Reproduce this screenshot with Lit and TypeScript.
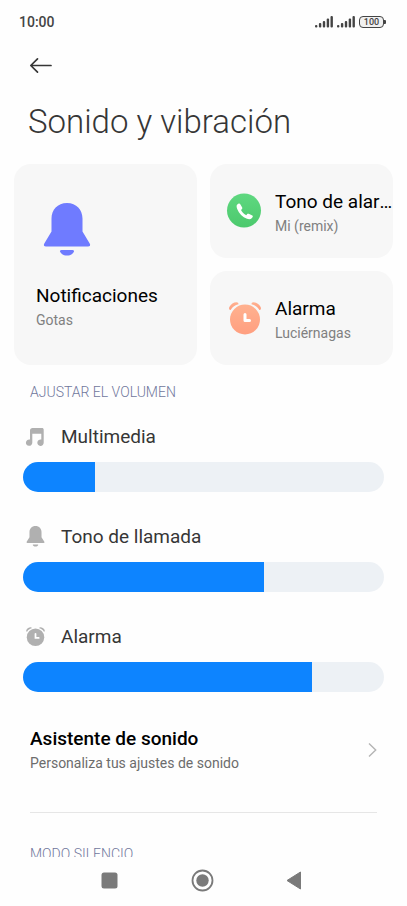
import { LitElement, html, css, svg } from "lit";
import { customElement, state } from "lit/decorators.js";

type IconName = "music" | "bell" | "clock";

interface Volume {
  id: string;
  label: string;
  icon: IconName;
  value: number;
}

const MAX_VOLUME = 15;

const bellShape = svg`
  <path d="M24 1C14.500 1 8.500 8 8.500 16.500V29.500L1.300 41.500C.3 43.500 1 44.500 3 44.500H45C47 44.500 47.700 43.500 46.700 41.500L39.500 29.500V16.500C39.500 8 33.500 1 24 1Z"/>
  <path d="M18.500 48H29.500C31 48 31.400 49 30.800 50C29.500 52.500 27 53.500 24 53.500S18.500 52.500 17.200 50C16.600 49 17 48 18.500 48Z"/>`;

const clockShape = svg`
  <path d="M1.500 8.500C.8 7.500 1 6.500 1.500 5.700C3 3 5.500 1.300 8.500 1.200C10 1.200 10.500 2 10.500 3.200C7 4 4.500 6 2.800 8.700C2.300 9.300 1.900 9.200 1.500 8.500Z"/>
  <path d="M32.500 8.500C33.200 7.500 33 6.500 32.500 5.700C31 3 28.500 1.300 25.500 1.200C24 1.200 23.500 2 23.500 3.200C27 4 29.500 6 31.200 8.700C31.700 9.300 32.100 9.200 32.500 8.500Z"/>
  <circle cx="17" cy="18.500" r="15"/>`;

@customElement("app-root")
export class AppRoot extends LitElement {
  static styles = css`
    :host {
      display: flex;
      flex-direction: column;
      height: 100vh;
      background: #fefefe;
      color: #363636;
      font-family: Roboto, "Noto Sans", sans-serif;
      font-size: 19px;
      line-height: 26px;
    }
    *, *::before, *::after { box-sizing: border-box; }
    svg { display: block; flex: none; }
    button, .link { border: 0; padding: 0; background: none; font: inherit; color: inherit; text-align: left; text-decoration: none; cursor: pointer; }
    h1, h2, p { margin: 0; font-weight: 400; }

    .status {
      display: flex;
      flex: none;
      align-items: center;
      justify-content: space-between;
      height: 44px;
      padding: 0 21px 0 19px;
      color: #444;
      font-size: 14px;
      font-weight: 500;
    }
    .tray { display: flex; align-items: center; gap: 4px; }
    .battery { display: flex; align-items: center; }
    .level {
      width: 25px;
      height: 12px;
      border: 1px solid #444;
      border-radius: 4px;
      background: #f0f0f0;
      font-size: 9px;
      line-height: 11px;
      text-align: center;
    }
    .tip { width: 2px; height: 4px; border-radius: 0 1px 1px 0; background: #444; }

    main { flex: 1; min-height: 0; overflow: hidden auto; scrollbar-width: none; }
    .back { display: block; margin: 8px 0 0 24px; padding: 4px; }
    .title { margin: 22px 28px 0; font-size: 33px; font-weight: 300; line-height: 44px; }

    .cards {
      display: grid;
      grid-template-columns: 1fr 1fr;
      grid-template-rows: 94px 94px;
      gap: 13px;
      padding: 0 14px;
      margin-top: 20px;
    }
    .card {
      display: flex;
      align-items: center;
      gap: 13px;
      min-width: 0;
      padding: 0 0 0 16px;
      border-radius: 17px;
      background: #f7f7f7;
      color: #000;
    }
    .card .words { padding-top: 3px; }
    .card.large {
      grid-row: span 2;
      flex-direction: column;
      align-items: flex-start;
      justify-content: center;
      gap: 23px;
      padding: 4px 22px 0;
    }
    .large .pic { margin-left: 7px; }
    .words { display: flex; flex-direction: column; min-width: 0; flex: 1; }
    .large .words { flex: none; }
    .name { overflow: hidden; text-overflow: ellipsis; white-space: nowrap; }
    .note { font-size: 14px; line-height: 22px; color: #808080; }

    .heading { padding: 0 30px; font-size: 14px; font-weight: 300; line-height: 20px; color: #70779c; }
    .cards + .heading { margin-top: 17px; }

    .volumes { display: flex; flex-direction: column; gap: 32px; margin-top: 22px; padding: 0 23px; }
    .volume { display: flex; flex-direction: column; gap: 12px; }
    .volume label { display: flex; align-items: center; gap: 15px; padding-left: 2px; }
    .slider {
      appearance: none;
      width: 100%;
      height: 30px;
      margin: 0;
      border-radius: 15px;
      background: linear-gradient(to right, #0d84ff var(--level), #edf1f5 var(--level));
      cursor: pointer;
    }
    .slider::-webkit-slider-thumb { appearance: none; width: 1px; height: 30px; background: transparent; }
    .slider::-moz-range-thumb { width: 1px; height: 30px; border: 0; background: transparent; }

    .link { display: flex; align-items: center; justify-content: space-between; margin-top: 34px; padding: 0 30px; }
    .link .name { font-weight: 500; color: #000; }
    .link .note { color: #6c6c6c; }
    .rule { height: 1px; margin: 38px 30px 31px; border: 0; background: #e6e6e6; }

    .nav { display: flex; flex: none; justify-content: center; align-items: center; gap: 68px; height: 49px; padding: 0 2px 2px 0; }
    .nav button { width: 25px; height: 25px; }
  `;

  @state() private volumes: Volume[] = [
    { id: "media", label: "Multimedia", icon: "music", value: 3 },
    { id: "ring", label: "Tono de llamada", icon: "bell", value: 10 },
    { id: "alarm", label: "Alarma", icon: "clock", value: 12 },
  ];

  private setVolume(id: string, event: Event) {
    const value = Number((event.target as HTMLInputElement).value);
    this.volumes = this.volumes.map((v) => (v.id === id ? { ...v, value } : v));
  }

  private signal() {
    return html`<svg width="18" height="12" viewBox="0 0 18 12" fill="#444" aria-hidden="true">
      <rect x="0" y="9" width="2.400" height="2.500" rx="1"/>
      <rect x="3.900" y="7" width="2.400" height="4.500" rx="1"/>
      <rect x="7.800" y="5" width="2.400" height="6.500" rx="1"/>
      <rect x="11.700" y="2.500" width="2.400" height="9" rx="1"/>
      <rect x="15.500" y="0" width="2.400" height="11.500" rx="1"/>
    </svg>`;
  }

  private smallIcon(name: IconName) {
    switch (name) {
      case "music":
        return html`<svg width="21" height="20" viewBox="0 0 21 20" fill="#b0b0b0" aria-hidden="true">
          <path d="M7.500 1H17C18 1 18.700 1.700 18.700 2.700V15.500A3.200 3.200 0 1 1 16.300 12.600V6.800H7.300V15.500A3.200 3.200 0 1 1 5 12.600V3.500C5 2 6 1 7.500 1Z"/>
        </svg>`;
      case "bell":
        return html`<svg width="21" height="22" viewBox="-3 1 54 56" fill="#b0b0b0" aria-hidden="true">${bellShape}</svg>`;
      case "clock":
        return html`<svg width="21" height="22" viewBox="-1 0 36 36" fill="#b0b0b0" aria-hidden="true">
          ${clockShape}<path d="M17 12.500V19.500H22.500" fill="none" stroke="#fff" stroke-width="3" stroke-linecap="round"/>
        </svg>`;
    }
  }

  render() {
    return html`
      <header class="status">
        <span>10:00</span>
        <div class="tray">
          ${this.signal()}${this.signal()}
          <div class="battery"><div class="level">100</div><div class="tip"></div></div>
        </div>
      </header>

      <main>
        <button class="back" aria-label="Atrás">
          <svg width="25" height="18" viewBox="0 0 25 18" fill="none" stroke="#363636" stroke-width="1.700" stroke-linecap="round" stroke-linejoin="round" aria-hidden="true">
            <path d="M23 9.500H3M9.500 2.800L2.800 9.500L9.500 16.200"/>
          </svg>
        </button>
        <h1 class="title">Sonido y vibración</h1>

        <section class="cards">
          <button class="card large">
            <svg class="pic" width="48" height="55" viewBox="0 0 48 55" fill="#6f7bff" aria-hidden="true">${bellShape}</svg>
            <span class="words"><span class="name">Notificaciones</span><span class="note">Gotas</span></span>
          </button>
          <button class="card">
            <svg width="36" height="36" viewBox="0 0 36 36" aria-hidden="true">
              <defs><linearGradient id="green" x2="0" y2="1"><stop stop-color="#5fd880"/><stop offset="1" stop-color="#4cc96d"/></linearGradient></defs>
              <circle cx="18" cy="17.500" r="17" fill="url(#green)"/>
              <path fill="#fff" d="M12.300 10.800L11.300 11.600C10.300 12.500 10.500 14.200 11.200 16C13 20.500 16.500 24 21 25.800C22.800 26.500 24.700 26.400 25.700 25.200L26.500 24.300C27 23.700 26.900 23 26.300 22.600L22.800 20.800C22.200 20.500 21.600 20.600 21.200 21.100L20.300 22.200C18 21 16 19 15 16.900L16 15.900C16.400 15.500 16.500 15 16.200 14.400L14.300 11.200C13.800 10.300 13 10.200 12.300 10.800Z"/>
            </svg>
            <span class="words"><span class="name">Tono de alarma</span><span class="note">Mi (remix)</span></span>
          </button>
          <button class="card">
            <svg width="36" height="36" viewBox="-2 -1 36 36" aria-hidden="true">
              <defs><linearGradient id="peach" x2="0" y2="1"><stop stop-color="#ffb18f"/><stop offset="1" stop-color="#ff9f80"/></linearGradient></defs>
              <g fill="url(#peach)">${clockShape}</g>
              <path d="M17 13.500V19.500H21.500" fill="none" stroke="#fff" stroke-width="3" stroke-linecap="round" stroke-linejoin="round"/>
            </svg>
            <span class="words"><span class="name">Alarma</span><span class="note">Luciérnagas</span></span>
          </button>
        </section>

        <h2 class="heading">AJUSTAR EL VOLUMEN</h2>
        <section class="volumes">
          ${this.volumes.map(
            (v) => html`<div class="volume">
              <label for=${v.id}>${this.smallIcon(v.icon)}<span>${v.label}</span></label>
              <input
                class="slider" type="range" id=${v.id} min="0" max=${MAX_VOLUME} .value=${String(v.value)}
                style="--level: ${(v.value / MAX_VOLUME) * 100}%"
                @input=${(e: Event) => this.setVolume(v.id, e)}
              />
            </div>`
          )}
        </section>

        <a class="link" href="#asistente">
          <span class="words"><span class="name">Asistente de sonido</span><span class="note">Personaliza tus ajustes de sonido</span></span>
          <svg width="9" height="16" viewBox="0 0 9 16" fill="none" stroke="#b4b4b4" stroke-width="1.400" aria-hidden="true"><path d="M1 1.500L7.700 8L1 14.500"/></svg>
        </a>
        <hr class="rule" />
        <h2 class="heading">MODO SILENCIO</h2>
      </main>

      <nav class="nav">
        <button aria-label="Recientes">
          <svg width="25" height="25" viewBox="0 0 25 25" aria-hidden="true"><rect x="4.500" y="4.500" width="16" height="16" rx="2.500" fill="#7a7a7a"/></svg>
        </button>
        <button aria-label="Inicio">
          <svg width="25" height="25" viewBox="0 0 25 25" aria-hidden="true"><circle cx="12.500" cy="12.500" r="10" fill="none" stroke="#7a7a7a" stroke-width="1.800"/><circle cx="12.500" cy="12.500" r="6.200" fill="#7a7a7a"/></svg>
        </button>
        <button aria-label="Volver">
          <svg width="25" height="25" viewBox="0 0 25 25" aria-hidden="true"><path d="M4 12.500L17.500 4V21Z" fill="#7a7a7a" stroke="#7a7a7a" stroke-linejoin="round"/></svg>
        </button>
      </nav>
    `;
  }
}
